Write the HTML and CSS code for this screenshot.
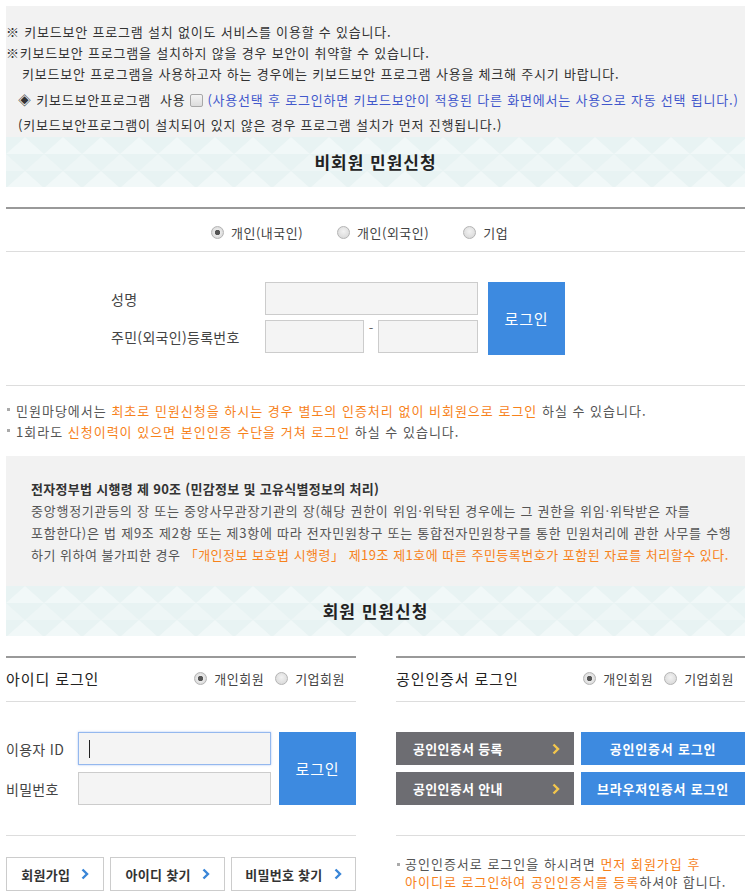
FILE: index.html
```html
<!DOCTYPE html>
<html lang="ko">
<head>
    <meta charset="UTF-8">
    <meta name="viewport" content="width=device-width, initial-scale=1.0">
    <title>민원신청 로그인</title>
    <link rel="stylesheet" href="styles.css">
</head>
<body>

<div class="page">
    <div class="kb-notice">
        <p>※ 키보드보안 프로그램 설치 없이도 서비스를 이용할 수 있습니다.</p>
        <p>※키보드보안 프로그램을 설치하지 않을 경우 보안이 취약할 수 있습니다.</p>
        <p class="indent">키보드보안 프로그램을 사용하고자 하는 경우에는 키보드보안 프로그램 사용을 체크해 주시기 바랍니다.</p>
        <p class="kb-use">◈ 키보드보안프로그램 &nbsp;사용 <input type="checkbox" class="chk"> <span class="blue">(사용선택 후 로그인하면 키보드보안이 적용된 다른 화면에서는 사용으로 자동 선택 됩니다.)</span></p>
        <p class="kb-sub">(키보드보안프로그램이 설치되어 있지 않은 경우 프로그램 설치가 먼저 진행됩니다.)</p>
    </div>

    <h2 class="band">비회원 민원신청</h2>

    <div class="guest">
        <div class="type-row">
            <label class="radio-label"><input type="radio" name="gtype" class="radio" checked> 개인(내국인)</label>
            <label class="radio-label"><input type="radio" name="gtype" class="radio"> 개인(외국인)</label>
            <label class="radio-label"><input type="radio" name="gtype" class="radio"> 기업</label>
        </div>

        <div class="guest-login">
            <div class="guest-fields">
                <span class="g-label">성명</span>
                <input type="text" class="box-input wide">
                <span class="g-label">주민(외국인)등록번호</span>
                <div class="rrn">
                    <input type="text" class="box-input rrn-1">
                    <span class="dash">-</span>
                    <input type="password" class="box-input rrn-2">
                </div>
            </div>
            <button class="blue-btn guest-btn">로그인</button>
        </div>

        <ul class="guest-notes">
            <li>민원마당에서는 <span class="orange">최초로 민원신청을 하시는 경우 별도의 인증처리 없이 비회원으로 로그인</span> 하실 수 있습니다.</li>
            <li>1회라도 <span class="orange">신청이력이 있으면 본인인증 수단을 거쳐 로그인</span> 하실 수 있습니다.</li>
        </ul>
    </div>

    <div class="law-box">
        <p class="law-title">전자정부법 시행령 제 90조 (민감정보 및 고유식별정보의 처리)</p>
        <p>중앙행정기관등의 장 또는 중앙사무관장기관의 장(해당 권한이 위임·위탁된 경우에는 그 권한을 위임·위탁받은 자를</p>
        <p>포함한다)은 법 제9조 제2항 또는 제3항에 따라 전자민원창구 또는 통합전자민원창구를 통한 민원처리에 관한 사무를 수행</p>
        <p class="tight">하기 위하여 불가피한 경우 <span class="orange">「개인정보 보호법 시행령」 제19조 제1호에 따른 주민등록번호가 포함된 자료를 처리할수 있다.</span></p>
    </div>

    <h2 class="band">회원 민원신청</h2>

    <div class="member">
        <div class="mem-col">
            <div class="mem-head">
                <h3>아이디 로그인</h3>
                <div class="mem-radios">
                    <label class="radio-label"><input type="radio" name="idtype" class="radio" checked> 개인회원</label>
                    <label class="radio-label"><input type="radio" name="idtype" class="radio"> 기업회원</label>
                </div>
            </div>
            <div class="mem-body">
                <div class="id-fields">
                    <span class="m-label">이용자 ID</span>
                    <div class="focus-field"><input type="text" class="box-input id-input focused"></div>
                    <span class="m-label">비밀번호</span>
                    <input type="password" class="box-input id-input">
                </div>
                <button class="blue-btn id-btn">로그인</button>
            </div>
            <div class="link-row">
                <a href="#" class="link-btn">회원가입 <svg width="8" height="12" viewBox="0 0 8 12"><path d="M1.5 1.5 L6 6 L1.5 10.5" fill="none" stroke="currentColor" stroke-width="2.4"/></svg></a>
                <a href="#" class="link-btn">아이디 찾기 <svg width="8" height="12" viewBox="0 0 8 12"><path d="M1.5 1.5 L6 6 L1.5 10.5" fill="none" stroke="currentColor" stroke-width="2.4"/></svg></a>
                <a href="#" class="link-btn">비밀번호 찾기 <svg width="8" height="12" viewBox="0 0 8 12"><path d="M1.5 1.5 L6 6 L1.5 10.5" fill="none" stroke="currentColor" stroke-width="2.4"/></svg></a>
            </div>
        </div>

        <div class="mem-col">
            <div class="mem-head">
                <h3>공인인증서 로그인</h3>
                <div class="mem-radios">
                    <label class="radio-label"><input type="radio" name="certtype" class="radio" checked> 개인회원</label>
                    <label class="radio-label"><input type="radio" name="certtype" class="radio"> 기업회원</label>
                </div>
            </div>
            <div class="mem-body cert-body">
                <a href="#" class="gray-btn">공인인증서 등록 <svg width="8" height="12" viewBox="0 0 8 12"><path d="M1.5 1.5 L6 6 L1.5 10.5" fill="none" stroke="currentColor" stroke-width="2.4"/></svg></a>
                <a href="#" class="cert-btn">공인인증서 로그인</a>
                <a href="#" class="gray-btn">공인인증서 안내 <svg width="8" height="12" viewBox="0 0 8 12"><path d="M1.5 1.5 L6 6 L1.5 10.5" fill="none" stroke="currentColor" stroke-width="2.4"/></svg></a>
                <a href="#" class="cert-btn">브라우저인증서 로그인</a>
            </div>
            <div class="cert-note">
                <span class="dot"></span>
                <p>공인인증서로 로그인을 하시려면 <span class="orange">먼저 회원가입 후<br>아이디로 로그인하여 공인인증서를 등록</span>하셔야 합니다.</p>
            </div>
        </div>
    </div>
</div>

</body>
</html>
```

FILE: styles.css
```css
* {
    box-sizing: border-box;
}
html, body {
    margin: 0;
    padding: 0;
}
body {
    font-family: "Noto Sans CJK KR", "Malgun Gothic", sans-serif;
    font-size: 13px;
    letter-spacing: 0.8px;
    color: #333;
    background-color: #fff;
    overflow: hidden;
}
a {
    text-decoration: none;
}
.page {
    width: 739px;
    margin: 6px;
}

/* keyboard security notice */
.kb-notice {
    background-color: #f2f2f2;
    padding: 15px 0 2px;
}
.kb-notice p {
    margin: 0;
    line-height: 21px;
    white-space: nowrap;
}
.kb-notice .indent {
    padding-left: 16px;
}
.kb-notice .kb-use {
    margin-top: 5px;
    padding-left: 12px;
}
.kb-notice .kb-sub {
    margin-top: 4px;
    padding-left: 12px;
}
.blue {
    color: #4258cc;
}
.orange {
    color: #f7821b;
}
.chk {
    appearance: none;
    -webkit-appearance: none;
    width: 13px;
    height: 13px;
    margin: 0;
    border: 1px solid #a8a8a8;
    border-radius: 2px;
    background: linear-gradient(#f4f4f4, #dcdcdc);
    vertical-align: -2px;
}

/* patterned title band */
.band {
    margin: 0;
    height: 50px;
    line-height: 50px;
    text-align: center;
    font-size: 17px;
    font-weight: bold;
    letter-spacing: 1px;
    color: #222;
    background-color: #eaf4f4;
    background-image: url("data:image/svg+xml,%3Csvg xmlns='http://www.w3.org/2000/svg' width='38' height='34'%3E%3Crect width='38' height='34' fill='%23e8f3f3'/%3E%3Cpath d='M19 0L38 17H0z' fill='%23f1f8f8'/%3E%3Cpath d='M0 17L19 34H-19z M38 17L57 34H19z' fill='%23eef6f6'/%3E%3C/svg%3E");
}

/* radios */
.radio-label {
    display: inline-flex;
    align-items: center;
    white-space: nowrap;
    letter-spacing: 0.5px;
    color: #444;
}
.radio {
    appearance: none;
    -webkit-appearance: none;
    width: 13px;
    height: 13px;
    margin: 0 7px 0 0;
    border: 1px solid #b4b4b4;
    border-radius: 50%;
    background: radial-gradient(circle at 50% 40%, #f2f2f2, #d4d4d4);
}
.radio:checked {
    background: radial-gradient(circle, #555 0, #555 2.4px, #eaeaea 3px, #d8d8d8 6px);
}

/* non-member */
.guest {
    margin-top: 20px;
    border-top: 2px solid #999;
}
.type-row {
    display: flex;
    align-items: center;
    gap: 34px;
    height: 43px;
    padding: 4px 0 0 205px;
    border-bottom: 1px solid #ddd;
}
.guest-login {
    display: flex;
    align-items: flex-start;
    padding: 30px 0 30px 105px;
    border-bottom: 1px solid #ddd;
}
.guest-fields {
    display: grid;
    grid-template-columns: 154px 213px;
    row-gap: 5px;
    align-items: center;
}
.g-label {
    font-size: 14px;
    letter-spacing: 0.3px;
    color: #444;
}
.box-input {
    height: 33px;
    margin: 0;
    padding: 0 10px;
    border: 1px solid #ccc;
    background-color: #f4f4f4;
    font-size: 14px;
    outline: none;
}
.wide {
    width: 213px;
}
.rrn {
    display: flex;
}
.rrn-1 {
    width: 99px;
}
.rrn-2 {
    width: 100px;
}
.dash {
    width: 14px;
    text-align: center;
    line-height: 16px;
    letter-spacing: 0;
    color: #666;
}
.blue-btn {
    border: none;
    background-color: #3d8ae0;
    color: #fff;
    font-family: inherit;
    font-size: 15px;
    letter-spacing: 0.8px;
    cursor: pointer;
}
.guest-btn {
    width: 77px;
    height: 73px;
    margin-left: 10px;
}
.guest-notes {
    list-style: none;
    margin: 0;
    padding: 14px 0 0;
}
.guest-notes li {
    line-height: 21px;
    letter-spacing: 1px;
    white-space: nowrap;
    color: #555;
}
.guest-notes li::before {
    content: "";
    display: inline-block;
    width: 3px;
    height: 3px;
    margin: 0 6px 0 1px;
    background-color: #aaa;
    vertical-align: 5px;
}

/* law text */
.law-box {
    margin-top: 14px;
    padding: 22px 0 20px 25px;
    background-color: #f2f2f2;
}
.law-box p {
    margin: 0;
    line-height: 22px;
    letter-spacing: 0.75px;
    color: #555;
    white-space: nowrap;
}
.law-box .law-title {
    font-weight: bold;
    letter-spacing: 0.3px;
    color: #333;
}
.law-box .tight {
    letter-spacing: 0.5px;
}

/* member */
.member {
    display: grid;
    grid-template-columns: 350px 349px;
    column-gap: 40px;
    margin-top: 20px;
}
.mem-col {
    border-top: 2px solid #999;
}
.mem-head {
    display: flex;
    align-items: center;
    justify-content: space-between;
    height: 44px;
    padding: 0 11px 3px 0;
    border-bottom: 1px solid #ddd;
}
.mem-head h3 {
    margin: 0;
    font-size: 15px;
    font-weight: normal;
    letter-spacing: 0.9px;
    color: #222;
}
.mem-radios {
    display: flex;
    gap: 11px;
}
.mem-body {
    display: flex;
    align-items: flex-start;
    padding: 30px 0;
    border-bottom: 1px solid #ddd;
}
.id-fields {
    display: grid;
    grid-template-columns: 72px 193px;
    row-gap: 7px;
    align-items: center;
}
.m-label {
    font-size: 14px;
    letter-spacing: 0.3px;
    color: #444;
}
.id-input {
    width: 193px;
}
.focus-field {
    position: relative;
}
.focused {
    border-color: #94b8ee;
    box-shadow: 0 0 2px rgba(90, 140, 230, 0.5);
}
.focus-field::after {
    content: "";
    position: absolute;
    left: 11px;
    top: 8px;
    width: 1px;
    height: 18px;
    background-color: #222;
}
.id-btn {
    width: 77px;
    height: 73px;
    margin-left: 8px;
}
.link-row {
    display: flex;
    gap: 6px;
    margin-top: 21px;
}
.link-btn {
    display: flex;
    align-items: center;
    justify-content: center;
    gap: 11px;
    height: 34px;
    border: 1px solid #ccc;
    background-color: #fff;
    color: #333;
    font-weight: bold;
    letter-spacing: 0.3px;
    white-space: nowrap;
}
.link-btn:nth-child(1) {
    width: 99px;
}
.link-btn:nth-child(2) {
    width: 115px;
}
.link-btn:nth-child(3) {
    width: 126px;
}
.link-btn svg {
    color: #3a86d8;
}

/* certificate */
.cert-body {
    display: grid;
    grid-template-columns: 178px 164px;
    column-gap: 7px;
    row-gap: 7px;
}
.gray-btn {
    display: flex;
    align-items: center;
    justify-content: space-between;
    height: 33px;
    padding: 0 14px 0 17px;
    background-color: #6d6d72;
    color: #fff;
    font-weight: bold;
    letter-spacing: 0.3px;
}
.gray-btn svg {
    color: #f3c64c;
}
.cert-btn {
    display: flex;
    align-items: center;
    justify-content: center;
    height: 33px;
    background-color: #3d8ae0;
    color: #fff;
    font-weight: bold;
    letter-spacing: 0.8px;
}
.cert-note {
    display: flex;
    margin-top: 19px;
    padding-left: 1px;
}
.cert-note .dot {
    flex: none;
    width: 3px;
    height: 3px;
    margin: 8px 5px 0 0;
    background-color: #aaa;
}
.cert-note p {
    margin: 0;
    line-height: 18px;
    color: #555;
    letter-spacing: 1px;
}
```
